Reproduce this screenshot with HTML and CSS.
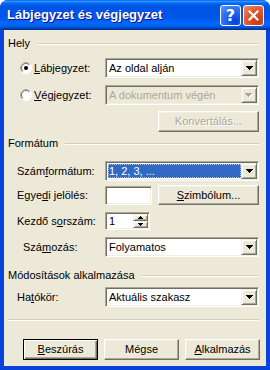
FILE: index.html
```html
<!DOCTYPE html>
<html lang="hu">
<head>
<meta charset="utf-8">
<link rel="stylesheet" href="styles.css">
</head>
<body>
<div class="window">
  <div class="titlebar">
    <span class="title">Lábjegyzet és végjegyzet</span>
    <div class="tbtns">
      <span class="tb help">?</span>
      <span class="tb close"><svg width="11" height="11" viewBox="0 0 11 11"><path d="M1.5 1.5L9.5 9.5M9.5 1.5L1.5 9.5" stroke="#fff" stroke-width="2.2" stroke-linecap="square"/></svg></span>
    </div>
  </div>
  <div class="client">
    <div class="group-h h1"><span>Hely</span><i></i></div>

    <div class="row r1">
      <div class="lbl radio-lbl">
        <svg class="radio" width="12" height="12" viewBox="0 0 12 12"><circle cx="6" cy="6" r="5.5" fill="#fff" stroke="#fff"/><path d="M2.1 9.9A5.5 5.5 0 0 1 9.9 2.1" fill="none" stroke="#aca899"/><path d="M2.8 9.2A4.5 4.5 0 0 1 9.2 2.8" fill="none" stroke="#716f64"/><circle cx="6" cy="6" r="2" fill="#000"/></svg>
        <span><u>L</u>ábjegyzet:</span>
      </div>
      <div class="combo"><span class="ctext">Az oldal alján</span><span class="arrow"><svg width="7" height="4" viewBox="0 0 7 4" shape-rendering="crispEdges"><path d="M0 0h7v1h-1v1h-1v1h-1v1h-1v-1h-1v-1h-1v-1h-1z" fill="#000"/></svg></span></div>
    </div>

    <div class="row r2">
      <div class="lbl radio-lbl">
        <svg class="radio" width="12" height="12" viewBox="0 0 12 12"><circle cx="6" cy="6" r="5.5" fill="#fff" stroke="#fff"/><path d="M2.1 9.9A5.5 5.5 0 0 1 9.9 2.1" fill="none" stroke="#aca899"/><path d="M2.8 9.2A4.5 4.5 0 0 1 9.2 2.8" fill="none" stroke="#716f64"/></svg>
        <span><u>V</u>égjegyzet:</span>
      </div>
      <div class="combo disabled"><span class="ctext">A dokumentum végén</span><span class="arrow"><svg width="8" height="5" viewBox="0 0 8 5" shape-rendering="crispEdges"><path d="M1 1h7v1h-1v1h-1v1h-1v1h-1v-1h-1v-1h-1v-1h-1z" fill="#fff"/><path d="M0 0h7v1h-1v1h-1v1h-1v1h-1v-1h-1v-1h-1v-1h-1z" fill="#aca899"/></svg></span></div>
    </div>

    <div class="row r3">
      <span class="btn wide disabled-btn">Konvertálás...</span>
    </div>

    <div class="group-h h2"><span>Formátum</span><i></i></div>

    <div class="row r4">
      <div class="lbl ind9">Szám<u>f</u>ormátum:</div>
      <div class="combo"><span class="ctext sel">1, 2, 3, ...</span><span class="arrow"><svg width="7" height="4" viewBox="0 0 7 4" shape-rendering="crispEdges"><path d="M0 0h7v1h-1v1h-1v1h-1v1h-1v-1h-1v-1h-1v-1h-1z" fill="#000"/></svg></span></div>
    </div>

    <div class="row r5">
      <div class="lbl ind9">Egye<u>d</u>i jelölés:</div>
      <div class="textbox"></div>
      <span class="btn wide push-right"><u>S</u>zimbólum...</span>
    </div>

    <div class="row r6">
      <div class="lbl ind9">Kezdő s<u>o</u>rszám:</div>
      <div class="spin">
        <span class="stext">1</span>
        <span class="sbtns">
          <span class="sb"><svg width="5" height="3" viewBox="0 0 5 3" shape-rendering="crispEdges"><path d="M2 0h1v1h1v1h1v1h-5v-1h1v-1h1z" fill="#000"/></svg></span>
          <span class="sb"><svg width="5" height="3" viewBox="0 0 5 3" shape-rendering="crispEdges"><path d="M0 0h5v1h-1v1h-1v1h-1v-1h-1v-1h-1z" fill="#000"/></svg></span>
        </span>
      </div>
    </div>

    <div class="row r7">
      <div class="lbl ind16">Szá<u>m</u>ozás:</div>
      <div class="combo"><span class="ctext">Folyamatos</span><span class="arrow"><svg width="7" height="4" viewBox="0 0 7 4" shape-rendering="crispEdges"><path d="M0 0h7v1h-1v1h-1v1h-1v1h-1v-1h-1v-1h-1v-1h-1z" fill="#000"/></svg></span></div>
    </div>

    <div class="group-h h3"><span>Módosítások alkalmazása</span><i></i></div>

    <div class="row r8">
      <div class="lbl ind9">Ha<u>t</u>ókör:</div>
      <div class="combo"><span class="ctext">Aktuális szakasz</span><span class="arrow"><svg width="7" height="4" viewBox="0 0 7 4" shape-rendering="crispEdges"><path d="M0 0h7v1h-1v1h-1v1h-1v1h-1v-1h-1v-1h-1v-1h-1z" fill="#000"/></svg></span></div>
    </div>

    <div class="sep"></div>

    <div class="buttons">
      <span class="btn dlg default"><u>B</u>eszúrás</span>
      <span class="btn dlg">Mégse</span>
      <span class="btn dlg"><u>A</u>lkalmazás</span>
    </div>
  </div>
</div>
</body>
</html>
```

FILE: styles.css
```css
html, body {
  margin: 0;
  padding: 0;
  background: #fff;
}
.window {
  width: 270px;
  height: 370px;
  display: flex;
  flex-direction: column;
  background: #0843dc;
  border-radius: 8px 8px 0 0;
  overflow: hidden;
  font-family: "Liberation Sans", Arial, sans-serif;
  font-size: 11px;
  line-height: 13px;
  color: #000;
}
.titlebar {
  height: 30px;
  flex: none;
  display: flex;
  align-items: center;
  padding: 0 6px 0 7px;
  background: linear-gradient(to bottom, #0058ee 0%, #3593ff 4%, #288eff 6%, #127dff 8%, #036ffc 10%, #0262ee 14%, #0057e5 20%, #0054e3 24%, #0055eb 56%, #005bf5 66%, #026afe 76%, #0062ef 86%, #0052d6 92%, #0040ab 94%, #003092 100%);
}
.title {
  flex: 1;
  color: #fff;
  font-weight: bold;
  font-size: 13px;
  text-shadow: 1px 1px #0f1089;
  padding-bottom: 1px;
}
.tbtns {
  display: flex;
  gap: 2px;
  padding-top: 1px;
}
.tb {
  width: 21px;
  height: 21px;
  box-sizing: border-box;
  border: 1px solid #fff;
  border-radius: 3px;
  display: flex;
  align-items: center;
  justify-content: center;
  color: #fff;
}
.help {
  background: radial-gradient(circle at 75% 80%, #0040e0 0%, #2a6cf6 55%, #5e96ff 100%);
  font-weight: bold;
  font-size: 16px;
  font-family: "DejaVu Sans", sans-serif;
}
.close {
  background: radial-gradient(circle at 75% 80%, #c93a10 0%, #e2582e 55%, #f0936f 100%);
}
.client {
  flex: 1;
  margin: 0 4px 4px 4px;
  background: #ece9d8;
  padding: 0 7px 0 4px;
  display: flex;
  flex-direction: column;
}
.group-h {
  display: flex;
  align-items: center;
  height: 13px;
  flex: none;
}
.group-h i {
  flex: 1;
  height: 0;
  border-top: 1px solid #d0d0bf;
  border-bottom: 1px solid #fff;
  margin-left: 7px;
}
.h1 { margin-top: 7px; }
.h2 { margin-top: 5px; }
.h3 { margin-top: 12px; }

.row {
  display: flex;
  align-items: center;
  height: 20px;
  flex: none;
}
.r1 { margin-top: 8px; }
.r2 { margin-top: 7px; }
.r3 { margin-top: 6px; height: 21px; justify-content: flex-end; }
.r4 { margin-top: 11px; }
.r5 { margin-top: 4px; }
.r6 { margin-top: 7px; height: 18px; }
.r7 { margin-top: 7px; }
.r8 { margin-top: 5px; }

.lbl {
  width: 97px;
  flex: none;
  display: flex;
  align-items: center;
  white-space: nowrap;
}
.radio-lbl { padding-left: 12px; box-sizing: border-box; gap: 2px; }
.ind9 { padding-left: 9px; box-sizing: border-box; display: block; }
.ind16 { padding-left: 15px; box-sizing: border-box; display: block; }
.radio { flex: none; }

.combo {
  flex: 1;
  height: 20px;
  box-sizing: border-box;
  background: #fff;
  border-style: solid;
  border-width: 1px;
  border-color: #aca899 #fff #fff #aca899;
  box-shadow: inset 1px 1px #716f64, inset -1px -1px #f1efe2;
  display: flex;
  align-items: stretch;
  padding: 1px;
}
.combo.disabled {
  background: #ece9d8;
  color: #aca899;
}
.ctext {
  flex: 1;
  display: flex;
  align-items: center;
  padding-left: 2px;
  white-space: nowrap;
  overflow: hidden;
}
.ctext.sel {
  background: #316ac5;
  color: #fff;
  margin: 1px 0 1px 1px;
  padding-left: 1px;
  outline: 1px dotted #a8c0e8;
  outline-offset: -1px;
}
.arrow {
  width: 16px;
  flex: none;
  box-sizing: border-box;
  background: #ece9d8;
  border-style: solid;
  border-width: 1px;
  border-color: #f1efe2 #716f64 #716f64 #f1efe2;
  box-shadow: inset 1px 1px #fff, inset -1px -1px #aca899;
  display: flex;
  align-items: center;
  justify-content: center;
}

.textbox {
  width: 47px;
  height: 19px;
  flex: none;
  box-sizing: border-box;
  background: #fff;
  border-style: solid;
  border-width: 1px;
  border-color: #aca899 #fff #fff #aca899;
  box-shadow: inset 1px 1px #716f64, inset -1px -1px #f1efe2;
}

.spin {
  width: 45px;
  height: 18px;
  flex: none;
  box-sizing: border-box;
  background: #fff;
  border-style: solid;
  border-width: 1px;
  border-color: #aca899 #fff #fff #aca899;
  box-shadow: inset 1px 1px #716f64, inset -1px -1px #f1efe2;
  display: flex;
  padding: 1px;
}
.stext {
  flex: 1;
  display: flex;
  align-items: center;
  padding-left: 2px;
}
.sbtns {
  width: 15px;
  display: flex;
  flex-direction: column;
}
.sb {
  flex: 1;
  box-sizing: border-box;
  background: #ece9d8;
  border-style: solid;
  border-width: 1px;
  border-color: #f1efe2 #716f64 #716f64 #f1efe2;
  box-shadow: inset 1px 1px #fff, inset -1px -1px #aca899;
  display: flex;
  align-items: center;
  justify-content: center;
}

.btn {
  box-sizing: border-box;
  height: 21px;
  background: #ece9d8;
  border-style: solid;
  border-width: 1px;
  border-color: #fff #716f64 #716f64 #fff;
  box-shadow: inset -1px -1px #aca899, inset 1px 1px #f1efe2;
  display: flex;
  align-items: center;
  justify-content: center;
  white-space: nowrap;
  flex: none;
}
.wide { width: 101px; }
.push-right { margin-left: auto; height: 20px; }
.disabled-btn {
  color: #aca899;
  text-shadow: 1px 1px #fff;
}
.sep {
  flex: none;
  height: 0;
  border-top: 1px solid #d0d0bf;
  border-bottom: 1px solid #fff;
  margin-top: 12px;
}
.buttons {
  flex: none;
  display: flex;
  gap: 6px;
  padding-left: 15px;
  margin-top: 18px;
}
.dlg { width: 75px; }
.default {
  border: 1px solid #000;
  box-shadow: inset 1px 1px #fff, inset -1px -1px #716f64, inset -2px -2px #aca899;
}
```
